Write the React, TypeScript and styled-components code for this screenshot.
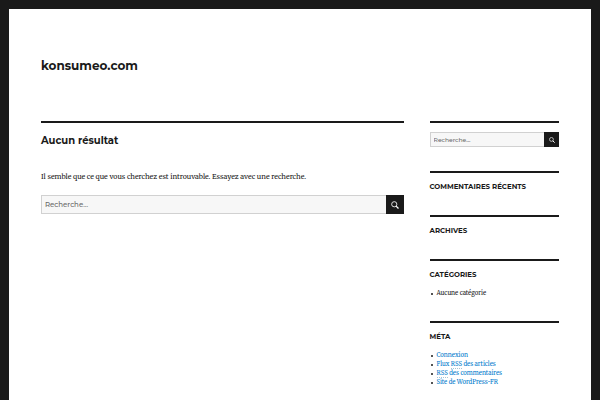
import React from "react";
import styled, { createGlobalStyle } from "styled-components";

const INK = "#1a1a1a";
const SANS = 'Montserrat, Inter, "Open Sans", sans-serif';
const SERIF = 'Merriweather, "DejaVu Serif", serif';

const GlobalStyle = createGlobalStyle`
  *, *::before, *::after { box-sizing: border-box; }
  body {
    margin: 0;
    background: ${INK};
    color: ${INK};
    font-family: ${SERIF};
  }
`;

const Frame = styled.div`
  display: flex;
  min-height: 100vh;
  padding: 9px 9px 0;
`;

const Site = styled.div`
  flex: 1;
  min-width: 0;
  padding: 0 32px;
  background: #fff;
`;

const Header = styled.header`
  padding: 48px 0 47px;
`;

const SiteTitle = styled.p`
  margin: 0;
  font: 700 12px/17px ${SANS};
`;

const HomeLink = styled.a`
  color: inherit;
  text-decoration: none;
`;

const Content = styled.div`
  display: grid;
  grid-template-columns: 14fr 5fr;
  column-gap: 26px;
  align-items: start;
`;

const Main = styled.main`
  min-width: 0;
  border-top: 2px solid ${INK};
`;

const PageTitle = styled.h1`
  margin: 10px 0 21px;
  font: 700 10px/16px ${SANS};
`;

const Intro = styled.p`
  margin: 0 0 11px;
  font-size: 7px;
  line-height: 14px;
`;

const Form = styled.form<{ $compact?: boolean }>`
  display: flex;
  height: ${(p) => (p.$compact ? 15 : 19)}px;
`;

const Field = styled.input<{ $compact?: boolean }>`
  flex: 1;
  min-width: 0;
  padding: 0 3px;
  border: 1px solid #d1d1d1;
  border-right: 0;
  border-radius: 0;
  background: #f7f7f7;
  color: #686868;
  font: 500 ${(p) => (p.$compact ? 6 : 7)}px ${SANS};

  &::placeholder {
    color: #686868;
    opacity: 1;
  }
`;

const Submit = styled.button<{ $compact?: boolean }>`
  display: flex;
  align-items: center;
  justify-content: center;
  width: ${(p) => (p.$compact ? 15 : 18)}px;
  padding: 0;
  border: 0;
  background: ${INK};
  color: #fff;
`;

const Sidebar = styled.aside`
  display: grid;
  row-gap: 24px;
  min-width: 0;
`;

const Widget = styled.section`
  padding-top: 9px;
  border-top: 2px solid ${INK};
`;

const WidgetTitle = styled.h2`
  margin: 0;
  font: 700 7px/9px ${SANS};
  text-transform: uppercase;
`;

const List = styled.ul`
  margin: 10px 0 -1px;
  padding: 0 0 0 7px;
  font-size: 6px;
  line-height: 9px;
`;

const Item = styled.li`
  position: relative;
  list-style: none;

  &::before {
    content: "";
    position: absolute;
    top: 4px;
    left: -6px;
    width: 2px;
    height: 2px;
    border-radius: 50%;
    background: ${INK};
  }
`;

const Link = styled.a`
  color: #007acc;
  text-decoration: none;
`;

const Abbr = styled.abbr`
  border-bottom: 1px dotted #a9c4d4;
  text-decoration: none;
`;

function SearchIcon({ size }: { size: number }) {
  return (
    <svg width={size} height={size} viewBox="0 0 16 16" fill="none" stroke="currentColor" aria-hidden="true">
      <circle cx="6.5" cy="6.5" r="5.2" strokeWidth="1.7" />
      <path d="M10.2 10.2l4.8 4.8" strokeWidth="2.6" />
    </svg>
  );
}

function SearchForm({ id, compact }: { id: string; compact?: boolean }) {
  return (
    <Form role="search" $compact={compact} onSubmit={(e) => e.preventDefault()}>
      <Field id={id} type="search" aria-label="Recherche" placeholder="Recherche…" $compact={compact} />
      <Submit type="submit" aria-label="Rechercher" $compact={compact}>
        <SearchIcon size={compact ? 6 : 8} />
      </Submit>
    </Form>
  );
}

export default function App() {
  return (
    <>
      <GlobalStyle />
      <Frame>
        <Site>
          <Header>
            <SiteTitle>
              <HomeLink href="#">konsumeo.com</HomeLink>
            </SiteTitle>
          </Header>
          <Content>
            <Main>
              <PageTitle>Aucun résultat</PageTitle>
              <Intro>Il semble que ce que vous cherchez est introuvable. Essayez avec une recherche.</Intro>
              <SearchForm id="main-search" />
            </Main>
            <Sidebar>
              <Widget>
                <SearchForm id="side-search" compact />
              </Widget>
              <Widget>
                <WidgetTitle>Commentaires récents</WidgetTitle>
              </Widget>
              <Widget>
                <WidgetTitle>Archives</WidgetTitle>
              </Widget>
              <Widget>
                <WidgetTitle>Catégories</WidgetTitle>
                <List>
                  <Item>Aucune catégorie</Item>
                </List>
              </Widget>
              <Widget>
                <WidgetTitle>Méta</WidgetTitle>
                <List>
                  <Item><Link href="#">Connexion</Link></Item>
                  <Item><Link href="#">Flux <Abbr title="Really Simple Syndication">RSS</Abbr> des articles</Link></Item>
                  <Item><Link href="#"><Abbr title="Really Simple Syndication">RSS</Abbr> des commentaires</Link></Item>
                  <Item><Link href="#">Site de WordPress-FR</Link></Item>
                </List>
              </Widget>
            </Sidebar>
          </Content>
        </Site>
      </Frame>
    </>
  );
}
